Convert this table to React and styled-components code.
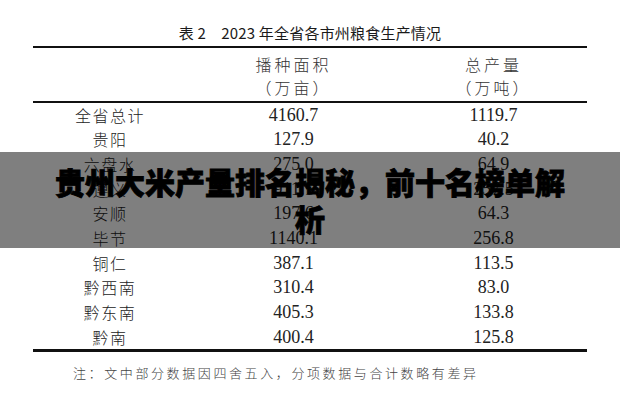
import React from 'react';
import styled, { createGlobalStyle } from 'styled-components';

const GlobalStyle = createGlobalStyle`
  html, body {
    margin: 0;
    padding: 0;
    background: #fff;
  }
`;

const Page = styled.div`
  position: relative;
  width: 620px;
  height: 400px;
  overflow: hidden;
  background: #fff;
  display: flex;
  flex-direction: column;
  align-items: center;
`;

const Caption = styled.div`
  margin-top: 23px;
  height: 20px;
  line-height: 20px;
  font-family: "Noto Sans CJK SC", "Noto Sans", sans-serif;
  font-size: 15px;
  color: #1a1a1a;
  letter-spacing: 0.2px;
  white-space: pre;
`;

const Table = styled.div`
  margin-top: 2.5px;
  width: 554px;
  border-top: 2.5px solid #111;
  border-bottom: 3px solid #111;
  display: grid;
  grid-template-columns: 154px 213px 187px;
  color: #222;
`;

const Head = styled.div`
  display: contents;
`;

const HeadCell = styled.div`
  padding: 5px 0 2px;
  border-bottom: 2px solid #111;
  text-align: center;
  font-family: "Noto Sans CJK SC", sans-serif;
  font-size: 16px;
  line-height: 23px;
  letter-spacing: 3px;
  font-weight: 300;
  color: #333;
`;

const Cell = styled.div`
  height: 24.7px;
  line-height: 24.7px;
  text-align: center;
  font-family: ${p => (p.$num ? '"Liberation Serif", serif' : '"Noto Sans CJK SC", sans-serif')};
  font-size: ${p => (p.$num ? '18px' : '16px')};
  font-weight: ${p => (p.$num ? 400 : 300)};
  letter-spacing: ${p => (p.$num ? '0' : '1.5px')};
  color: #222;
`;

const Note = styled.div`
  align-self: flex-start;
  margin: 11px 0 0 73px;
  font-family: "Noto Sans CJK SC", sans-serif;
  font-size: 13px;
  font-weight: 300;
  letter-spacing: 2.6px;
  color: #444;
`;

const Banner = styled.div`
  position: absolute;
  left: 0;
  right: 0;
  top: 152px;
  height: 96px;
  background: rgba(0, 0, 0, 0.5);
  display: flex;
  align-items: center;
  justify-content: center;
  padding: 0 45px;
  box-sizing: border-box;
`;

const BannerTitle = styled.h1`
  margin: 0;
  text-align: center;
  font-family: "Noto Sans CJK SC", sans-serif;
  font-size: 30px;
  line-height: 37px;
  font-weight: 900;
  color: #000;
  -webkit-text-stroke: 0.8px #000;
`;

const rows = [
  ['全省总计', '4160.7', '1119.7'],
  ['贵阳', '127.9', '40.2'],
  ['六盘水', '275.0', '64.9'],
  ['遵义', '911.1', '257.5'],
  ['安顺', '197.6', '64.3'],
  ['毕节', '1140.1', '256.8'],
  ['铜仁', '387.1', '113.5'],
  ['黔西南', '310.4', '83.0'],
  ['黔东南', '405.3', '133.8'],
  ['黔南', '400.4', '125.8'],
];

export default function App() {
  return (
    <>
      <GlobalStyle />
      <Page>
        <Caption>表 2　2023 年全省各市州粮食生产情况</Caption>
        <Table>
          <Head>
            <HeadCell />
            <HeadCell>播种面积<br />（万亩）</HeadCell>
            <HeadCell>总产量<br />（万吨）</HeadCell>
          </Head>
          {rows.map(r => (
            <React.Fragment key={r[0]}>
              <Cell>{r[0]}</Cell>
              <Cell $num>{r[1]}</Cell>
              <Cell $num>{r[2]}</Cell>
            </React.Fragment>
          ))}
        </Table>
        <Note>注：文中部分数据因四舍五入，分项数据与合计数略有差异</Note>
        <Banner>
          <BannerTitle>贵州大米产量排名揭秘，前十名榜单解析</BannerTitle>
        </Banner>
      </Page>
    </>
  );
}
